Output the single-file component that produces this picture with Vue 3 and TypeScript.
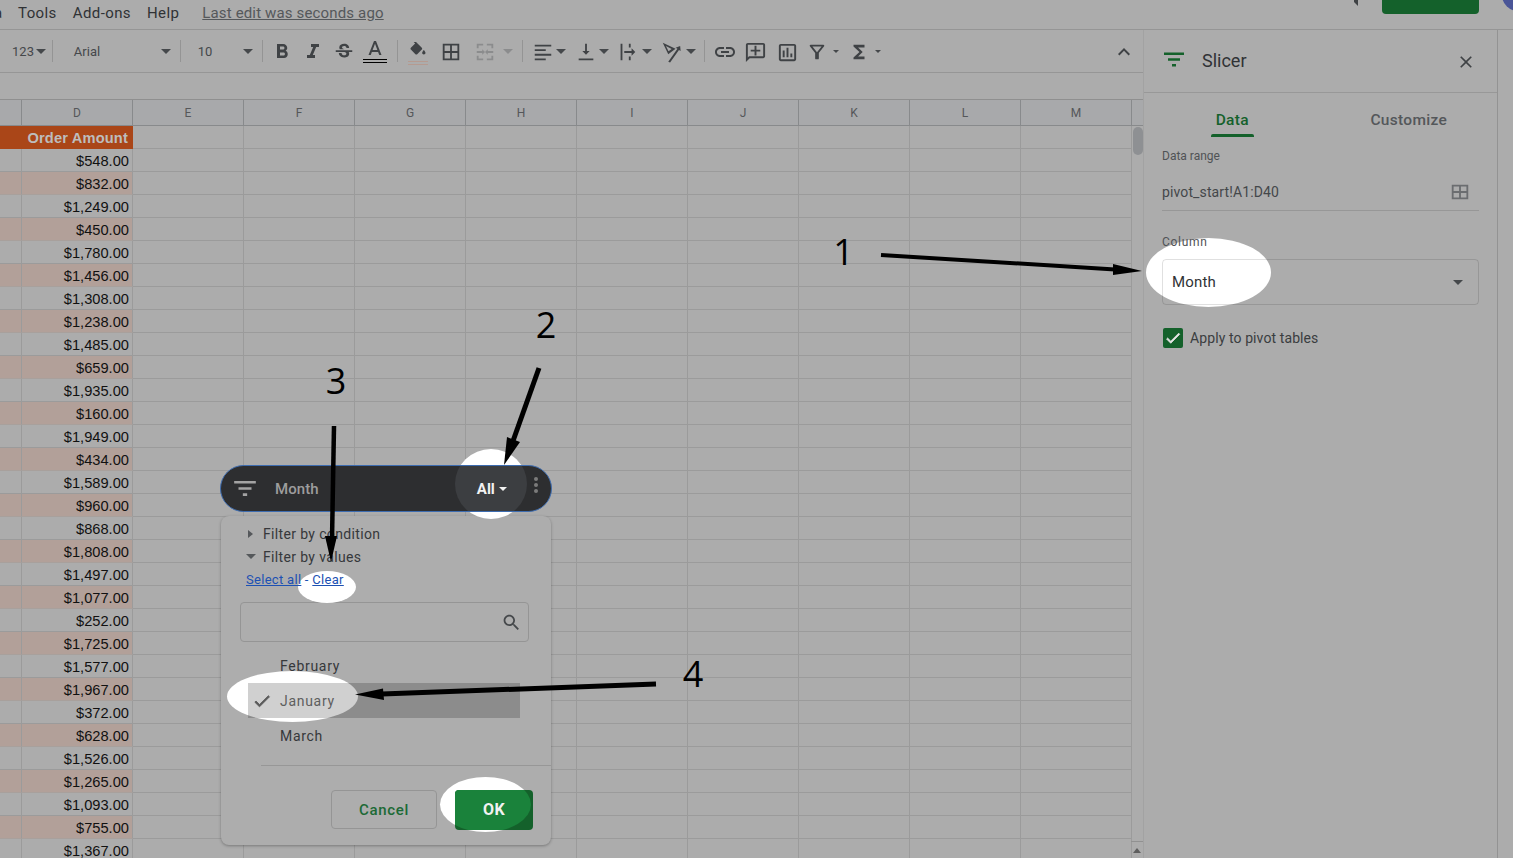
<script setup lang="ts">
const amounts = [
  '$548.00', '$832.00', '$1,249.00', '$450.00', '$1,780.00', '$1,456.00', '$1,308.00', '$1,238.00',
  '$1,485.00', '$659.00', '$1,935.00', '$160.00', '$1,949.00', '$434.00', '$1,589.00', '$960.00',
  '$868.00', '$1,808.00', '$1,497.00', '$1,077.00', '$252.00', '$1,725.00', '$1,577.00', '$1,967.00',
  '$372.00', '$628.00', '$1,526.00', '$1,265.00', '$1,093.00', '$755.00', '$1,367.00',
]
const letters = ['D', 'E', 'F', 'G', 'H', 'I', 'J', 'K', 'L', 'M']
const emptyCols = letters.slice(1)

interface Tool {
  kind: 'icon' | 'caret' | 'small' | 'sep' | 'text'
  cx: number
  w: number
  d?: string
  size?: number
  label?: string
  faint?: boolean
  under?: string
}

const raw: Omit<Tool, 'w'>[] = [
  { kind: 'text', cx: 23, label: '123' },
  { kind: 'caret', cx: 41 },
  { kind: 'sep', cx: 52 },
  { kind: 'text', cx: 87, label: 'Arial' },
  { kind: 'caret', cx: 166 },
  { kind: 'sep', cx: 180 },
  { kind: 'text', cx: 205, label: '10' },
  { kind: 'caret', cx: 248 },
  { kind: 'sep', cx: 262 },
  { kind: 'icon', cx: 282, size: 24, d: 'M15.6 10.79c.97-.67 1.65-1.77 1.65-2.79 0-2.26-1.75-4-4-4H7v14h7.04c2.09 0 3.71-1.7 3.71-3.79 0-1.52-.86-2.82-2.15-3.42zM10 6.5h3c.83 0 1.5.67 1.5 1.5s-.67 1.5-1.5 1.5h-3v-3zm3.5 9H10v-3h3.5c.83 0 1.5.67 1.5 1.5s-.67 1.5-1.5 1.5z' },
  { kind: 'icon', cx: 313, size: 24, d: 'M10 4v3h2.21l-3.42 8H6v3h8v-3h-2.21l3.42-8H18V4z' },
  { kind: 'icon', cx: 344, size: 22, d: 'M6.85 7.08C6.85 4.37 9.45 3 12.24 3c1.64 0 3 .49 3.9 1.28.77.65 1.46 1.73 1.46 3.24h-3.01c0-.31-.05-.59-.15-.85-.29-.86-1.2-1.28-2.25-1.28-1.86 0-2.34 1.02-2.34 1.7 0 .48.25.88.74 1.21.38.25.77.48 1.41.7H7.39c-.21-.34-.54-.89-.54-1.92zM21 12v-2H3v2h9.62c1.15.45 1.96.75 1.96 1.97 0 1-.81 1.67-2.28 1.67-1.54 0-2.93-.54-2.93-2.51H6.4c0 .55.08 1.13.24 1.58.81 2.29 3.29 3.3 5.67 3.3 2.27 0 5.3-.89 5.3-4.05 0-.3-.01-1.16-.48-1.96H21z' },
  { kind: 'icon', cx: 375, size: 24, under: 'double', d: 'M11 1L5.5 15h2.25l1.12-3h6.25l1.12 3h2.25L13 1h-2zm-1.38 9L12 3.67 14.38 10H9.62z' },
  { kind: 'sep', cx: 397 },
  { kind: 'icon', cx: 418, size: 20, under: 'fill', d: 'M16.56 6.94L7.62-2 6.21-.59l2.38 2.38-5.15 5.15c-.59.59-.59 1.54 0 2.12l5.5 5.5c.29.29.68.44 1.06.44s.77-.15 1.06-.44l5.5-5.5c.59-.58.59-1.53 0-2.12zM19 9.5s-2 2.17-2 3.5c0 1.1.9 2 2 2s2-.9 2-2c0-1.33-2-3.5-2-3.5z' },
  { kind: 'icon', cx: 451, size: 22, d: 'M3 3v18h18V3H3zm8 16H5v-6h6v6zm0-8H5V5h6v6zm8 8h-6v-6h6v6zm0-8h-6V5h6v6z' },
  { kind: 'icon', cx: 485, size: 22, faint: true, d: 'M3 3h7v2H5v3H3zM14 3h7v5h-2V5h-5zM3 16h2v3h5v2H3zM19 16h2v5h-7v-2h5zM3 11h6V9l3 3-3 3v-2H3zM21 11h-6V9l-3 3 3 3v-2h6z' },
  { kind: 'caret', cx: 508, faint: true },
  { kind: 'sep', cx: 522 },
  { kind: 'icon', cx: 543, size: 22, d: 'M3 4h18v2H3zM3 9h12v2H3zM3 14h18v2H3zM3 19h12v2H3z' },
  { kind: 'caret', cx: 561 },
  { kind: 'icon', cx: 586, size: 22, d: 'M16 11h-3V3h-2v8H8l4 4 4-4zM4 19v2h16v-2H4z' },
  { kind: 'caret', cx: 604 },
  { kind: 'icon', cx: 627, size: 22, d: 'M5 3h2v18H5zM14 3h2v4h-2zM14 17h2v4h-2zM9 11h8V8l4 4-4 4v-3H9z' },
  { kind: 'caret', cx: 647 },
  { kind: 'icon', cx: 671, size: 22, d: 'M3 2l14 6.5-8 6zM6.5 5.5l2.8 5.6 3.4-2.5zM9 22.5L19 8.5l-2-1.2L22 5.5l.5 5.5-1.8-1.3L11 23.5z' },
  { kind: 'caret', cx: 691 },
  { kind: 'sep', cx: 704 },
  { kind: 'icon', cx: 725, size: 24, d: 'M3.9 12c0-1.71 1.39-3.1 3.1-3.1h4V7H7c-2.76 0-5 2.24-5 5s2.24 5 5 5h4v-1.9H7c-1.71 0-3.1-1.39-3.1-3.1zM8 13h8v-2H8v2zm9-6h-4v1.9h4c1.71 0 3.1 1.39 3.1 3.1s-1.39 3.1-3.1 3.1h-4V17h4c2.76 0 5-2.24 5-5s-2.24-5-5-5z' },
  { kind: 'icon', cx: 755, size: 23, d: 'M20 2H4c-1.1 0-2 .9-2 2v18l4-4h14c1.1 0 2-.9 2-2V4c0-1.1-.9-2-2-2zm0 14H5.17L4 17.17V4h16v12zM13 5h-2v4H7v2h4v4h2v-4h4V9h-4z' },
  { kind: 'icon', cx: 787, size: 23, d: 'M19 3H5c-1.1 0-2 .9-2 2v14c0 1.1.9 2 2 2h14c1.1 0 2-.9 2-2V5c0-1.1-.9-2-2-2zm0 16H5V5h14v14zM7 10h2v7H7zm4-3h2v10h-2zm4 6h2v4h-2z' },
  { kind: 'icon', cx: 817, size: 22, d: 'M7 6h10l-5.01 6.3L7 6zm-2.75-.39C6.27 8.2 10 13 10 13v6c0 .55.45 1 1 1h2c.55 0 1-.45 1-1v-6s3.72-4.8 5.74-7.39c.51-.66.04-1.61-.79-1.61H5.04c-.83 0-1.3.95-.79 1.61z' },
  { kind: 'small', cx: 836 },
  { kind: 'icon', cx: 859, size: 22, d: 'M18 4H6v2l6.5 6L6 18v2h12v-3h-7l5-5-5-5h7z' },
  { kind: 'small', cx: 878 },
  { kind: 'icon', cx: 1124, size: 24, d: 'M7.41 15.41L12 10.83l4.59 4.58L18 14l-6-6-6 6z' },
]

const widthOf = (t: Omit<Tool, 'w'>): number => {
  if (t.kind === 'sep') return 1
  if (t.kind === 'caret') return 10
  if (t.kind === 'small') return 6
  if (t.kind === 'text') return (t.label?.length ?? 0) * 8
  return t.size ?? 22
}

// toolbar slots are spaced by their centre, as read off the sheet toolbar
let right = 0
const tools = raw.map((t) => {
  const w = widthOf(t)
  const left = t.cx - w / 2
  const gap = left - right
  right = left + w
  return { ...t, w, gap }
})

const arrows = [
  { line: [881, 255, 1115, 269.5], w: 4, head: '1142,271 1113,264 1113,275' },
  { line: [539, 368, 513, 441], w: 5, head: '504,465 507,437 520,442' },
  { line: [334, 426, 332, 540], w: 4.5, head: '331,562 325,536 337,536' },
  { line: [656, 684, 382, 694], w: 5, head: '355,694.5 383,688.5 384,700' },
]
const digits = [
  { n: '1', x: 843.5, y: 252 },
  { n: '2', x: 546, y: 325 },
  { n: '3', x: 336, y: 381 },
  { n: '4', x: 693, y: 674 },
]
</script>

<template>
  <div class="app">
    <header class="menubar">
      <span class="cut">a</span>
      <span class="menu">Tools</span>
      <span class="menu">Add-ons</span>
      <span class="menu">Help</span>
      <span class="saved">Last edit was seconds ago</span>
      <div class="top-right">
        <svg class="top-comment" width="24" height="6" viewBox="0 0 24 6"><path d="M0 2h18v-2h4v6l-4-4z" fill="#3f4245" /></svg>
        <div class="share"></div>
        <div class="avatar"></div>
      </div>
    </header>

    <div class="body">
      <main class="sheet">
        <div class="toolbar">
          <template v-for="(t, i) in tools" :key="i">
            <span v-if="t.kind === 'sep'" class="sep" :style="{ marginLeft: t.gap + 'px' }"></span>
            <span v-else-if="t.kind === 'text'" class="tool-text" :style="{ marginLeft: t.gap + 'px', width: t.w + 'px' }">{{ t.label }}</span>
            <span v-else-if="t.kind === 'caret'" class="caret" :class="{ faint: t.faint }" :style="{ marginLeft: t.gap + 'px' }"></span>
            <span v-else-if="t.kind === 'small'" class="caret small" :style="{ marginLeft: t.gap + 'px' }"></span>
            <span v-else class="tool-icon" :style="{ marginLeft: t.gap + 'px', width: t.w + 'px' }">
              <svg :width="t.size" :height="t.size" viewBox="0 0 24 24"><path :d="t.d" :fill="t.faint ? '#8b8c8d' : '#3f4245'" fill-rule="evenodd" /></svg>
              <span v-if="t.under === 'double'" class="under-double"></span>
              <span v-if="t.under === 'fill'" class="under-fill"></span>
            </span>
          </template>
        </div>
        <div class="formula"></div>

        <div class="grid">
          <div class="hd corner"></div>
          <div v-for="l in letters" :key="l" class="hd">{{ l }}</div>
          <div class="hd-rail"></div>

          <div class="cell title"></div>
          <div class="cell title amount">Order Amount</div>
          <div v-for="c in emptyCols" :key="c" class="cell"></div>
          <div class="rail"></div>

          <template v-for="(a, i) in amounts" :key="i">
            <div class="cell" :class="{ pink: i % 2 === 1 }"></div>
            <div class="cell num" :class="{ pink: i % 2 === 1 }">{{ a }}</div>
            <div v-for="c in emptyCols" :key="c" class="cell"></div>
            <div class="rail"></div>
          </template>
        </div>
        <div class="thumb"></div>
        <div class="scroll-end"><span class="up"></span></div>
      </main>

      <aside class="panel">
        <div class="panel-head">
          <svg width="24" height="24" viewBox="0 0 24 24"><path d="M10 18.5h4v-2.500h-4zM2 4.500v2.500h20V4.500zM6 12.800h12v-2.500H6z" fill="#14612b" /></svg>
          <span class="panel-title">Slicer</span>
          <svg class="panel-close" width="20" height="20" viewBox="0 0 24 24"><path d="M19 6.41L17.59 5 12 10.59 6.41 5 5 6.41 10.59 12 5 17.59 6.41 19 12 13.41 17.59 19 19 17.59 13.41 12z" fill="#3f4245" /></svg>
        </div>
        <div class="tabs">
          <div class="tab active">Data</div>
          <div class="tab">Customize</div>
        </div>
        <div class="panel-body">
          <div class="label">Data range</div>
          <div class="range">
            <span>pivot_start!A1:D40</span>
            <svg width="22" height="22" viewBox="0 0 24 24"><path d="M3 4v16h18V4H3zm8 14H5v-5h6v5zm0-7H5V6h6v5zm8 7h-6v-5h6v5zm0-7h-6V6h6v5z" fill="#6b6d70" fill-rule="evenodd" /></svg>
          </div>
          <div class="label column-label">Column</div>
          <div class="select">
            <span class="blob blob-month"></span>
            <span class="select-text">Month</span>
            <span class="caret select-caret"></span>
          </div>
          <label class="apply">
            <span class="box">
              <svg width="18" height="18" viewBox="0 0 24 24"><path d="M9 16.17L4.83 12l-1.42 1.41L9 19 21 7l-1.41-1.41z" fill="#e6e6e6" stroke="#e6e6e6" stroke-width="1" /></svg>
            </span>
            Apply to pivot tables
          </label>
        </div>
      </aside>
      <div class="edge"></div>
    </div>

    <section class="slicer">
      <span class="blob blob-all"></span>
      <div class="pill">
        <span class="pill-glow"></span>
        <svg width="26" height="26" viewBox="0 0 24 24"><path d="M10 18.500h4v-2.500h-4zM2 4.500v2.500h20V4.500zM6 12.800h12v-2.500H6z" fill="#a3a3a3" /></svg>
        <span class="pill-name">Month</span>
        <span class="pill-all">All</span>
        <span class="caret pill-caret"></span>
        <span class="dots"><i></i><i></i><i></i></span>
      </div>
      <div class="drop">
        <div class="drop-row"><span class="tri-right"></span>Filter by condition</div>
        <div class="drop-row second"><span class="tri-down"></span>Filter by values</div>
        <div class="links">
          <span class="blob blob-clear"></span>
          <a>Select all</a><span class="dash"> - </span><a>Clear</a>
        </div>
        <div class="search">
          <svg width="21" height="21" viewBox="0 0 24 24"><path d="M15.5 14h-.79l-.28-.27C15.41 12.59 16 11.11 16 9.5 16 5.91 13.09 3 9.5 3S3 5.91 3 9.5 5.91 16 9.5 16c1.61 0 3.09-.59 4.23-1.57l.27.28v.79l5 4.99L20.49 19l-4.99-5zm-6 0C7.01 14 5 11.99 5 9.5S7.01 5 9.5 5 14 7.01 14 9.5 11.99 14 9.5 14z" fill="#45484b" /></svg>
        </div>
        <div class="months">
          <div class="month">February</div>
          <div class="month-wrap">
            <span class="blob blob-jan"></span>
            <div class="month picked">
              <span class="picked-glow"></span>
              <svg class="tick" width="20" height="20" viewBox="0 0 24 24"><path d="M9 16.17L4.83 12l-1.42 1.41L9 19 21 7l-1.41-1.41z" fill="#5a5a5a" stroke="#5a5a5a" stroke-width="1" /></svg>
              <span class="picked-text">January</span>
            </div>
          </div>
          <div class="month">March</div>
        </div>
        <div class="rule"></div>
        <div class="actions">
          <button class="cancel">Cancel</button>
          <div class="ok-wrap">
            <span class="blob blob-ok"></span>
            <button class="ok"><span class="ok-glow"></span><span class="ok-text">OK</span></button>
          </div>
        </div>
      </div>
    </section>

    <svg class="arrows" width="1513" height="858" viewBox="0 0 1513 858">
      <g v-for="(a, i) in arrows" :key="i">
        <line :x1="a.line[0]" :y1="a.line[1]" :x2="a.line[2]" :y2="a.line[3]" stroke="#000" :stroke-width="a.w" />
        <polygon :points="a.head" fill="#000" />
      </g>
      <text v-for="d in digits" :key="d.n" :x="d.x" :y="d.y + 13" class="digit" text-anchor="middle">{{ d.n }}</text>
    </svg>
  </div>
</template>

<style scoped>
.app {
  position: relative;
  width: 1513px;
  height: 858px;
  overflow: hidden;
  background: #acacac;
  font-family: Roboto, "Liberation Sans", sans-serif;
  color: #303235;
}
.menubar {
  display: flex;
  align-items: flex-start;
  height: 29px;
  border-bottom: 1px solid #959595;
  font-size: 15px;
  line-height: 26px;
  letter-spacing: 0.4px;
}
.cut {
  width: 18px;
  flex: none;
  text-indent: -6px;
  overflow: hidden;
}
.menu {
  margin-right: 16px;
}
.saved {
  margin-left: 7px;
  letter-spacing: 0.15px;
  color: #55585b;
  text-decoration: underline;
}
.top-right {
  display: flex;
  margin-left: auto;
}
.top-comment {
  margin-right: 22px;
}
.share {
  width: 97px;
  height: 14px;
  margin-right: 1px;
  background: #14612b;
  border-radius: 0 0 4px 4px;
}
.avatar {
  width: 32px;
  height: 32px;
  margin: -21px -21px 0 22px;
  border-radius: 50%;
  background: #4a5597;
}
.body {
  display: flex;
  height: 829px;
}
.sheet {
  position: relative;
  width: 1143px;
  flex: none;
}
.toolbar {
  display: flex;
  align-items: center;
  height: 42px;
  border-bottom: 1px solid #969696;
}
.sep {
  flex: none;
  width: 1px;
  height: 22px;
  background: #949494;
}
.tool-text {
  flex: none;
  text-align: center;
  font-size: 13px;
  color: #45484b;
}
.tool-icon {
  position: relative;
  top: 1px;
  display: flex;
  flex: none;
  justify-content: center;
}
.under-double {
  position: absolute;
  left: 0;
  right: 0;
  top: 19px;
  height: 2px;
  border-top: 1px solid #000;
  border-bottom: 1px solid #000;
}
.under-fill {
  position: absolute;
  left: 0;
  right: 0;
  top: 19px;
  height: 2px;
  border-top: 1px solid #b59a90;
  border-bottom: 1px solid #b59a90;
}
.caret {
  flex: none;
  width: 0;
  height: 0;
  box-sizing: content-box;
  border-left: 5px solid transparent;
  border-right: 5px solid transparent;
  border-top: 5px solid #45484b;
}
.caret.faint {
  border-top-color: #8b8c8d;
}
.caret.small {
  border-left-width: 3px;
  border-right-width: 3px;
  border-top-width: 3px;
}
.formula {
  height: 26px;
  border-bottom: 1px solid #8f8f8f;
}
.grid {
  display: grid;
  grid-template-columns: 22px repeat(10, 111px) 12px;
  grid-auto-rows: 23px;
  height: 758px;
  overflow: hidden;
}
.hd {
  height: 26px;
  margin-bottom: -3px;
  background: #a8a9ab;
  border-right: 1px solid #888a8c;
  border-bottom: 1px solid #888a8c;
  box-sizing: border-box;
  color: #55575a;
  font-size: 12px;
  line-height: 26px;
  text-align: center;
  position: relative;
  z-index: 1;
}
.hd-rail {
  height: 26px;
  background: #a8a9ab;
  border-bottom: 1px solid #888a8c;
  box-sizing: border-box;
}
.cell {
  box-sizing: border-box;
  border-right: 1px solid #9b9b9b;
  border-bottom: 1px solid #9b9b9b;
  font-family: "Liberation Sans", Arial, sans-serif;
  font-size: 14.67px;
  line-height: 25px;
  white-space: nowrap;
  overflow: hidden;
}
.grid > .cell:nth-child(n) {
  position: relative;
  top: 3px;
}
.rail {
  position: relative;
  top: 3px;
}
.title {
  background: #aa4618;
  border-color: #aa4618;
}
.amount {
  color: #bdbdbd;
  font-weight: 700;
  letter-spacing: 0.15px;
  text-align: right;
  padding-right: 4px;
}
.num {
  color: #111;
  text-align: right;
  padding-right: 3px;
}
.pink {
  background: #b2a099;
  border-bottom-color: #a8a09c;
}
.thumb {
  position: absolute;
  left: 1133px;
  top: 97px;
  width: 10px;
  height: 28px;
  border-radius: 5px;
  background: #8e9093;
}
.scroll-end {
  position: absolute;
  left: 1131px;
  top: 811px;
  width: 12px;
  height: 18px;
  display: flex;
  justify-content: center;
  align-items: center;
  border-top: 1px solid #919191;
  box-sizing: border-box;
}
.up {
  width: 0;
  height: 0;
  border-left: 4px solid transparent;
  border-right: 4px solid transparent;
  border-bottom: 5px solid #5e5e5e;
}
.panel {
  width: 353px;
  flex: none;
  border-left: 1px solid #a2a2a2;
  border-right: 1px solid #939393;
}
.edge {
  flex: 1;
}
.panel-head {
  display: flex;
  align-items: center;
  height: 63px;
  padding: 0 21px 2px 18px;
  box-sizing: border-box;
  border-bottom: 1px solid #989898;
}
.panel-title {
  margin-left: 16px;
  font-size: 18px;
  color: #303235;
}
.panel-close {
  margin: 3px 0 0 auto;
}
.tabs {
  display: flex;
  height: 43px;
}
.tab {
  flex: 1;
  text-align: center;
  font-size: 15.5px;
  font-weight: 500;
  letter-spacing: 0.3px;
  line-height: 55px;
  color: #54575a;
  position: relative;
}
.tab.active {
  color: #14612b;
}
.tab.active::after {
  content: "";
  position: absolute;
  left: 50%;
  margin-left: -21px;
  top: 41px;
  width: 43px;
  height: 3px;
  border-radius: 2px 2px 0 0;
  background: #14612b;
}
.panel-body {
  position: relative;
  z-index: 0;
  padding: 13px 18px 0;
}
.label {
  font-size: 12px;
  line-height: 14px;
  color: #505356;
}
.range {
  display: flex;
  justify-content: space-between;
  align-items: center;
  height: 36px;
  margin-top: 9px;
  padding: 2px 8px 0 0;
  border-bottom: 1px solid #979797;
  font-size: 14px;
  letter-spacing: 0.12px;
  color: #44474a;
}
.column-label {
  position: relative;
  z-index: 1;
  margin-top: 24px;
  letter-spacing: 0.7px;
}
.select {
  position: relative;
  display: flex;
  align-items: center;
  height: 46px;
  margin-top: 10px;
  padding: 0 15px 0 9px;
  box-sizing: border-box;
  border: 1px solid rgba(0, 0, 0, 0.12);
  border-radius: 4px;
}
.blob {
  position: absolute;
  background: #fff;
  border-radius: 50%;
}
.blob-month {
  left: -17px;
  top: -22px;
  width: 125px;
  height: 69px;
  z-index: -1;
}
.select-text {
  font-size: 15px;
  letter-spacing: 0.15px;
  color: #303235;
}
.select-caret {
  margin-left: auto;
}
.apply {
  display: flex;
  align-items: center;
  gap: 7px;
  margin-top: 23px;
  font-size: 14px;
  letter-spacing: 0.1px;
  color: #3a3d40;
  padding-left: 1px;
}
.box {
  display: flex;
  align-items: center;
  justify-content: center;
  width: 20px;
  height: 20px;
  border-radius: 2px;
  background: #14612b;
}
.slicer {
  position: absolute;
  left: 220px;
  top: 465px;
  width: 332px;
}
.blob-all {
  left: 235px;
  top: -16px;
  width: 72px;
  height: 70px;
  z-index: 2;
}
.pill {
  position: relative;
  z-index: 3;
  display: flex;
  align-items: center;
  height: 47px;
  padding-left: 11px;
  box-sizing: border-box;
  overflow: hidden;
  background: #2d2e30;
  border: 1px solid #3d6cb0;
  border-radius: 24px;
}
.pill > * {
  position: relative;
}
.pill > .pill-glow {
  position: absolute;
  left: 234px;
  top: -17px;
  width: 72px;
  height: 70px;
  border-radius: 50%;
  background: #3c3e41;
}
.pill-name {
  margin-left: 17px;
  font-size: 15px;
  font-weight: 500;
  letter-spacing: 0.1px;
  color: #9d9d9d;
}
.pill-all {
  margin-left: 158px;
  font-size: 15px;
  font-weight: 700;
  color: #f2f2f2;
}
.pill-caret {
  margin-left: 4px;
  border-top-color: #f2f2f2;
  border-left-width: 4px;
  border-right-width: 4px;
  border-top-width: 4px;
}
.dots {
  display: flex;
  flex-direction: column;
  gap: 2px;
  margin: 0 0 7px 27px;
}
.dots i {
  width: 4px;
  height: 4px;
  border-radius: 50%;
  background: #7b7b7b;
}
.drop {
  position: relative;
  z-index: 1;
  height: 329px;
  margin: 4px 1px 0;
  padding-top: 6px;
  box-sizing: border-box;
  background: #adadad;
  border-radius: 8px;
  box-shadow: 0 1px 3px rgba(0, 0, 0, 0.3);
  font-size: 14px;
  letter-spacing: 0.35px;
  color: #36383b;
}
.drop-row {
  display: flex;
  align-items: center;
  height: 23px;
  padding-left: 27px;
  position: relative;
  z-index: 1;
}
.tri-right {
  width: 0;
  height: 0;
  margin-right: 10px;
  border-top: 4px solid transparent;
  border-bottom: 4px solid transparent;
  border-left: 5px solid #55585b;
}
.tri-down {
  width: 0;
  height: 0;
  margin: 0 7px 0 -2px;
  border-left: 5px solid transparent;
  border-right: 5px solid transparent;
  border-top: 5px solid #55585b;
}
.links {
  position: relative;
  height: 22px;
  line-height: 23px;
  padding-left: 25px;
  font-size: 13px;
  letter-spacing: 0.3px;
}
.links a {
  position: relative;
  color: #1d51b3;
  text-decoration: underline;
}
.dash {
  position: relative;
  color: #1d51b3;
}
.blob-clear {
  left: 77px;
  top: 3px;
  width: 58px;
  height: 32px;
}
.search {
  display: flex;
  align-items: center;
  justify-content: flex-end;
  height: 40px;
  margin: 12px 22px 0 19px;
  padding-right: 6px;
  box-sizing: border-box;
  border: 1px solid #959595;
  border-radius: 4px;
}
.months {
  margin-top: 6px;
  letter-spacing: 0.7px;
}
.month {
  height: 35px;
  padding-left: 59px;
  line-height: 36px;
}
.month-wrap {
  position: relative;
}
.blob-jan {
  left: 6px;
  top: -12px;
  width: 131px;
  height: 51px;
}
.picked {
  position: relative;
  width: 272px;
  margin-left: 27px;
  padding-left: 32px;
  box-sizing: border-box;
  overflow: hidden;
  background: #8c8c8c;
  color: #5e5e5e;
}
.picked-glow {
  position: absolute;
  left: -21px;
  top: -12px;
  width: 131px;
  height: 51px;
  border-radius: 50%;
  background: #d0d0d0;
}
.picked-text {
  position: relative;
}
.tick {
  position: absolute;
  left: 4px;
  top: 8px;
}
.rule {
  height: 1px;
  margin: 12px 0 0 40px;
  background: #979797;
}
.actions {
  display: flex;
  justify-content: flex-end;
  align-items: flex-start;
  gap: 18px;
  margin-top: 24px;
  padding-right: 18px;
}
.cancel {
  width: 106px;
  height: 39px;
  background: transparent;
  border: 1px solid #959595;
  border-radius: 4px;
  font: 500 15px Roboto, sans-serif;
  letter-spacing: 0.7px;
  color: #1c6a36;
}
.ok-wrap {
  position: relative;
}
.blob-ok {
  left: -15px;
  top: -13px;
  width: 91px;
  height: 55px;
}
.ok {
  display: block;
  position: relative;
  width: 78px;
  height: 40px;
  padding: 0 0 2px;
  overflow: hidden;
  background: #14612b;
  border: 0;
  border-radius: 4px;
  font: 700 16px Roboto, sans-serif;
  letter-spacing: 0.5px;
  color: #f2f2f2;
}
.ok-glow {
  position: absolute;
  left: -15px;
  top: -13px;
  width: 91px;
  height: 55px;
  border-radius: 50%;
  background: #1a823b;
}
.ok-text {
  position: relative;
}
.arrows {
  position: absolute;
  left: 0;
  top: 0;
  z-index: 5;
  pointer-events: none;
}
.digit {
  font-family: "Open Sans", sans-serif;
  font-size: 36px;
  fill: #000;
}
</style>
